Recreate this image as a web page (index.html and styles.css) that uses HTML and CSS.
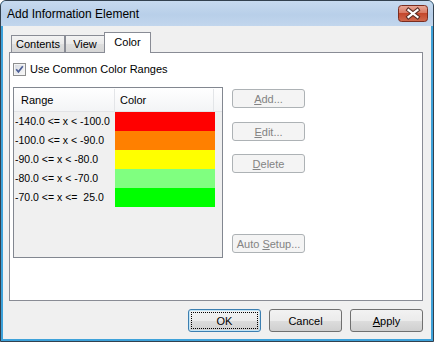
FILE: index.html
```html
<!DOCTYPE html>
<html>
<head>
<meta charset="UTF-8">
<link rel="stylesheet" href="styles.css">
<title>Add Information Element</title>
</head>
<body>

<div class="window">
  <div class="titlebar">
    <span class="title">Add Information Element</span>
    <span class="close">
      <svg width="30" height="17" viewBox="0 0 30 17">
        <defs>
          <linearGradient id="cg" x1="0" y1="0" x2="0" y2="1">
            <stop offset="0" stop-color="#e9aa9a"/>
            <stop offset="0.45" stop-color="#d97a64"/>
            <stop offset="0.5" stop-color="#c4472c"/>
            <stop offset="1" stop-color="#d06a4f"/>
          </linearGradient>
        </defs>
        <rect x="0.5" y="0.5" width="29" height="16" rx="3" fill="url(#cg)" stroke="#7a2d20"/>
        <path d="M10.5 5 L19.5 12 M19.5 5 L10.5 12" stroke="#5b2f26" stroke-width="4.2" stroke-linecap="square"/>
        <path d="M10.5 5 L19.5 12 M19.5 5 L10.5 12" stroke="#ffffff" stroke-width="2.2" stroke-linecap="square"/>
      </svg>
    </span>
  </div>

  <div class="client">
    <div class="tabs">
      <span class="tab tab-contents">Contents</span>
      <span class="tab tab-view">View</span>
      <span class="tab tab-color active">Color</span>
    </div>

    <div class="panel">
      <div class="check">
        <svg class="box" width="13" height="13" viewBox="0 0 13 13">
          <defs>
            <linearGradient id="bg" x1="0" y1="0" x2="1" y2="1">
              <stop offset="0" stop-color="#d8dce2"/>
              <stop offset="1" stop-color="#f7f7f7"/>
            </linearGradient>
          </defs>
          <rect x="0.5" y="0.5" width="12" height="12" fill="#f4f4f4" stroke="#8e8f8f"/>
          <rect x="2" y="2" width="9" height="9" fill="url(#bg)"/>
          <path d="M3.2 6.3 L5.4 8.8 L9.8 3.2" fill="none" stroke="#4d5f96" stroke-width="1.7"/>
        </svg>
        <span class="check-label">Use Common Color Ranges</span>
      </div>

      <div class="panel-body">
        <div class="list">
          <div class="list-head">
            <span class="h-range">Range</span>
            <span class="h-color">Color</span>
            <span class="h-rest"></span>
          </div>
          <div class="row"><span class="range">-140.0 &lt;= x &lt; -100.0</span><span class="swatch red"></span></div>
          <div class="row"><span class="range">-100.0 &lt;= x &lt; -90.0</span><span class="swatch orange"></span></div>
          <div class="row"><span class="range">-90.0 &lt;= x &lt; -80.0</span><span class="swatch yellow"></span></div>
          <div class="row"><span class="range">-80.0 &lt;= x &lt; -70.0</span><span class="swatch lightgreen"></span></div>
          <div class="row"><span class="range">-70.0 &lt;= x &lt;=  25.0</span><span class="swatch green"></span></div>
        </div>

        <div class="side">
          <span class="btn off btn-add"><span><u>A</u>dd...</span></span>
          <span class="btn off btn-edit"><span><u>E</u>dit...</span></span>
          <span class="btn off btn-delete"><span><u>D</u>elete</span></span>
          <span class="btn off btn-auto"><span>Auto <u>S</u>etup...</span></span>
        </div>
      </div>
    </div>

    <div class="footer">
      <span class="btn big default"><span class="focus">OK</span></span>
      <span class="btn big"><span>Cancel</span></span>
      <span class="btn big"><span><u>A</u>pply</span></span>
    </div>
  </div>
</div>

</body>
</html>
```

FILE: styles.css
```css
* { box-sizing: border-box; }

body { margin: 0; background: #ffffff; color: #000000;
       font-family: "Liberation Sans", Arial, sans-serif; font-size: 11px; }

.window { width: 434px; height: 342px; border: 1px solid #33414f;
          border-radius: 6px 6px 0 0; background: #3ea2da;
          display: flex; flex-direction: column; overflow: hidden; }

/* title bar */
.titlebar { height: 25px; display: flex; align-items: flex-start;
            background: linear-gradient(to bottom, #c7daef, #b8cfe9 55%, #c2d6ed); }
.title { font-size: 12px; line-height: 14px; margin: 6px 0 0 6px; }
.close { margin: 4px 5px 0 auto; height: 17px; }
.close svg { display: block; }

/* client area */
.client { flex: 1; margin: 0 2px 2px; background: #f0f0f0;
          padding: 6px 8px 7px 6px; display: flex; flex-direction: column; }

.tabs { display: flex; align-items: flex-start; height: 21px;
        margin-bottom: -1px; padding-left: 2px; position: relative; z-index: 1; }
.tab { height: 17px; margin-top: 3px; border: 1px solid #898c95; border-bottom: none;
       background: linear-gradient(to bottom, #f3f3f3, #e9e9e9 50%, #dedede 51%, #d6d6d6);
       text-align: center; line-height: 15px; padding-top: 1px; }
.tab-contents { width: 54px; }
.tab-view { width: 40px; }
.tab-color { width: 47px; margin-left: -1px; }
.tab.active { height: 21px; margin-top: 0; background: #ffffff; padding-top: 2px; }

.panel { height: 249px; border: 1px solid #898c95; background: #ffffff;
         padding: 10px 0 0 3px; }

.check { display: flex; align-items: center; height: 13px; }
.check .box { display: block; }
.check-label { margin-left: 4px; line-height: 13px; }

.panel-body { display: flex; margin-top: 11px; }

/* list of ranges */
.list { width: 210px; height: 171px; border: 1px solid #828790; background: #f0f0f0; }
.list-head { display: flex; height: 24px; line-height: 22px; padding-top: 1px;
             background: linear-gradient(to bottom, #ffffff, #f3f4f6);
             border-bottom: 1px solid #e2e3e6; }
.h-range { width: 101px; padding-left: 7px; border-right: 1px solid #e3e5e8; }
.h-color { width: 99px; padding-left: 5px; border-right: 1px solid #e3e5e8; }
.h-rest { flex: 1; }

.row { display: flex; height: 19px; }
.range { width: 101px; padding-left: 1px; line-height: 19px; white-space: pre;
         font-size: 10.5px; }
.swatch { width: 100px; }
.red { background: #ff0000; }
.orange { background: #ff8000; }
.yellow { background: #ffff00; }
.lightgreen { background: #80ff80; }
.green { background: #00ff00; }

/* buttons */
.side { display: flex; flex-direction: column; margin-left: 9px; width: 73px; }
.btn { display: flex; align-items: center; justify-content: center;
       border: 1px solid #707070; border-radius: 3px;
       background: linear-gradient(to bottom, #f2f2f2, #ebebeb 50%, #dddddd 51%, #cfcfcf); }
.btn.off { height: 19px; border-color: #adb2b5; background: #f4f4f4; color: #838383; }
.btn-add { margin-top: 2px; }
.btn-edit { margin-top: 14px; }
.btn-delete { margin-top: 13px; }
.btn-auto { margin-top: 61px; height: 20px; }

.footer { display: flex; justify-content: flex-end; gap: 8px; margin-top: 8px; }
.btn.big { width: 73px; height: 23px; }
.btn.default { border-color: #3c7fb1; box-shadow: inset 0 0 0 1px #c4e5f6; padding: 2px; }
.focus { flex: 1; align-self: stretch; display: flex; align-items: center;
         justify-content: center; border: 1px dotted #000000; }
```
